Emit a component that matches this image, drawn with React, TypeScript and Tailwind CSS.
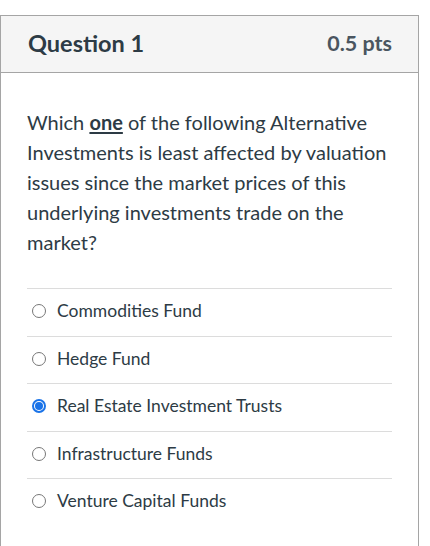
const answers = [
  { id: "a1", label: "Commodities Fund", checked: false },
  { id: "a2", label: "Hedge Fund", checked: false },
  { id: "a3", label: "Real Estate Investment Trusts", checked: true },
  { id: "a4", label: "Infrastructure Funds", checked: false },
  { id: "a5", label: "Venture Capital Funds", checked: false },
];

function Radio({ checked }: { checked: boolean }) {
  if (checked) {
    return (
      <span className="flex h-[14px] w-[14px] shrink-0 items-center justify-center rounded-full border-2 border-[#1a73e8] bg-white">
        <span className="h-[8px] w-[8px] rounded-full bg-[#1a73e8]" />
      </span>
    );
  }
  return (
    <span className="h-[14px] w-[14px] shrink-0 rounded-full border-[1.5px] border-[#777] bg-white" />
  );
}

export default function App() {
  return (
    <div
      className="min-h-[546px] bg-white pt-[15px] text-[#2d3b45]"
      style={{ fontFamily: "Lato, 'Open Sans', sans-serif" }}
    >
      <div className="w-[419px] border border-b-0 border-[#a5a5a5] min-h-[531px]">
        {/* Header */}
        <div className="flex h-[57px] items-center justify-between border-b border-[#a5a5a5] bg-[#f5f5f5] pl-[27px] pr-[26px] pb-[1px]">
          <h2 className="text-[23.5px] font-bold">Question 1</h2>
          <span className="text-[21.5px] font-bold text-[#4a5560]">0.5 pts</span>
        </div>

        {/* Body */}
        <div className="px-[26px] pt-[34px]">
          <p className="text-[20px] leading-[30px]">
            Which <strong className="font-bold underline underline-offset-2">one</strong> of the
            following Alternative Investments is least affected by valuation issues since the market
            prices of this underlying investments trade on the market?
          </p>

          <div className="mt-[31px]">
            {answers.map((a) => (
              <div
                key={a.id}
                className="flex h-[47.5px] items-center gap-[11px] border-t border-[#dcdcdc] pl-[5px] pb-[2px] text-[17.5px]"
              >
                <Radio checked={a.checked} />
                <span>{a.label}</span>
              </div>
            ))}
          </div>
        </div>
      </div>
    </div>
  );
}
